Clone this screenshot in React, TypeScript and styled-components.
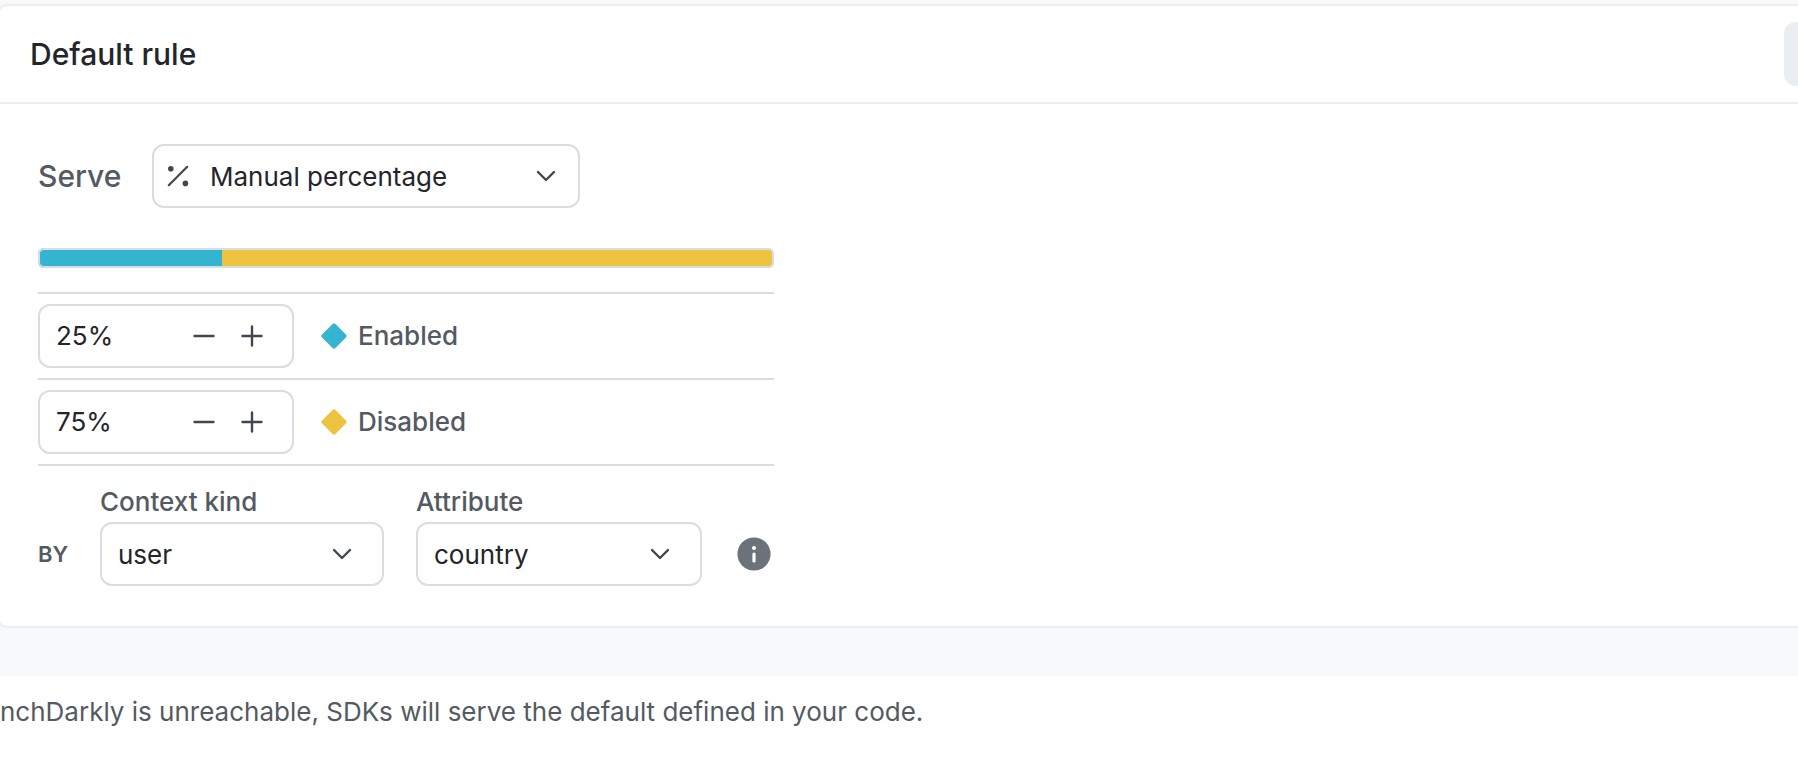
import React, { useState } from "react";
import styled, { createGlobalStyle } from "styled-components";

const color = {
  canvas: "#f8f9fb",
  surface: "#ffffff",
  subtleBorder: "#ebeef1",
  border: "#d8dde3",
  text: "#23252a",
  muted: "#545a62",
  icon: "#414750",
  info: "#6c727a",
  enabled: "#34b4d0",
  disabled: "#edc340",
};

const GlobalStyle = createGlobalStyle`
  *, *::before, *::after { box-sizing: border-box; }
  body {
    margin: 0;
    background: ${color.surface};
    color: ${color.text};
    font-family: Inter, "Liberation Sans", sans-serif;
    font-size: 26px;
    line-height: 32px;
  }
  button, input, select { font: inherit; color: inherit; }
`;

const Page = styled.main`
  overflow-x: hidden;
`;

const Canvas = styled.div`
  padding: 4px 0 48px;
  background: ${color.canvas};
`;

const Card = styled.section`
  margin: 0 -80px 0 -4px;
  border: 2px solid ${color.subtleBorder};
  border-radius: 12px;
  background: ${color.surface};
`;

const CardHeader = styled.header`
  display: flex;
  align-items: center;
  justify-content: space-between;
  padding: 16px 26px 16px 32px;
  border-bottom: 2px solid ${color.subtleBorder};
`;

const Title = styled.h2`
  margin: 0;
  font-size: 30px;
  font-weight: 500;
`;

const MoreButton = styled.button`
  width: 66px;
  height: 64px;
  border: 0;
  border-radius: 12px;
  background: ${color.subtleBorder};
`;

const CardBody = styled.div`
  max-width: 816px;
  padding: 40px;
`;

const ServeRow = styled.div`
  display: flex;
  align-items: center;
  gap: 32px;
`;

const ServeLabel = styled.label`
  width: 82px;
  font-size: 30px;
  font-weight: 500;
  color: ${color.muted};
`;

const SelectBox = styled.span<{ $width: number }>`
  position: relative;
  display: block;
  width: ${(p) => p.$width}px;
  color: ${color.icon};
`;

const NativeSelect = styled.select<{ $indent: number }>`
  display: block;
  width: 100%;
  height: 64px;
  padding: 2px 64px 0 ${(p) => p.$indent}px;
  border: 2px solid ${color.border};
  border-radius: 12px;
  background: ${color.surface};
  color: ${color.text};
  appearance: none;
`;

const Overlay = styled.svg<{ $left?: number; $right?: number }>`
  position: absolute;
  top: 20px;
  ${(p) => (p.$left !== undefined ? `left: ${p.$left}px;` : `right: ${p.$right}px;`)}
  pointer-events: none;
`;

const Bar = styled.div`
  display: flex;
  height: 20px;
  margin: 40px 0 24px;
  border-radius: 6px;
  overflow: hidden;
  outline: 2px solid ${color.border};
  outline-offset: -2px;
`;

const Segment = styled.div<{ $fill: string }>`
  background: ${(p) => p.$fill};
`;

const Variations = styled.ul`
  margin: 0;
  padding: 0;
  list-style: none;
  border-top: 2px solid ${color.border};
`;

const Variation = styled.li`
  display: flex;
  align-items: center;
  gap: 26px;
  padding: 10px 0;
  border-bottom: 2px solid ${color.border};
`;

const Stepper = styled.div`
  display: flex;
  align-items: center;
  width: 256px;
  height: 64px;
  padding: 0 16px;
  border: 2px solid ${color.border};
  border-radius: 12px;
`;

const StepperInput = styled.input`
  flex: 1;
  min-width: 0;
  padding: 0;
  border: 0;
  background: none;
  outline: none;
`;

const StepButton = styled.button`
  display: flex;
  align-items: center;
  justify-content: center;
  width: 48px;
  height: 48px;
  padding: 0;
  border: 0;
  background: none;
  color: ${color.icon};
`;

const VariationLabel = styled.label`
  display: flex;
  align-items: center;
  gap: 10px;
  font-weight: 500;
  color: ${color.muted};
`;

const RolloutBy = styled.div`
  display: flex;
  align-items: flex-end;
  padding-top: 20px;
  gap: 32px;
`;

const ControlLine = styled.div`
  display: flex;
  align-items: center;
  height: 64px;
`;

const By = styled.span`
  width: 30px;
  font-size: 22px;
  font-weight: 600;
  color: ${color.muted};
`;

const Field = styled.div`
  display: flex;
  flex-direction: column;
  gap: 4px;
`;

const FieldLabel = styled.label`
  font-weight: 500;
  color: ${color.muted};
`;

const InfoButton = styled.button`
  display: flex;
  justify-content: center;
  width: 40px;
  padding: 0;
  border: 0;
  background: none;
`;

const Note = styled.p`
  margin: 0;
  padding: 20px 0 30px;
  color: ${color.muted};
`;

const PercentIcon = () => (
  <Overlay $left={14} width="24" height="24" viewBox="0 0 24 24" aria-hidden="true">
    <path d="M2.8 21.2 21.2 2.8" stroke="currentColor" strokeWidth="2.2" strokeLinecap="round" />
    <circle cx="4.8" cy="4.8" r="2.8" fill="currentColor" />
    <circle cx="19.4" cy="19.4" r="2.8" fill="currentColor" />
  </Overlay>
);

const Chevron = ({ right }: { right: number }) => (
  <Overlay $right={right} width="24" height="24" viewBox="0 0 24 24" aria-hidden="true">
    <path
      d="m4 8 8 8 8-8"
      fill="none"
      stroke="currentColor"
      strokeWidth="2.4"
      strokeLinecap="round"
      strokeLinejoin="round"
    />
  </Overlay>
);

const StepIcon = ({ plus = false }: { plus?: boolean }) => (
  <svg width="24" height="24" viewBox="0 0 24 24" aria-hidden="true">
    <path
      d={plus ? "M2.5 12h19M12 2.5v19" : "M2.5 12h19"}
      stroke="currentColor"
      strokeWidth="2.4"
      strokeLinecap="round"
    />
  </svg>
);

const Diamond = ({ fill }: { fill: string }) => (
  <svg width="28" height="28" viewBox="0 0 28 28" aria-hidden="true">
    <rect x="4.6" y="4.6" width="18.8" height="18.8" rx="1.6" fill={fill} transform="rotate(45 14 14)" />
  </svg>
);

const InfoIcon = () => (
  <svg width="34" height="34" viewBox="0 0 34 34" aria-hidden="true">
    <circle cx="17" cy="17" r="16.6" fill={color.info} />
    <circle cx="17" cy="11" r="2" fill="#fff" />
    <path d="M17 17v7" stroke="#fff" strokeWidth="3.2" strokeLinecap="round" />
  </svg>
);

type SelectProps = {
  id: string;
  width: number;
  options: string[];
  indent?: number;
  chevronRight?: number;
  children?: React.ReactNode;
};

const Select = ({ id, width, options, indent = 16, chevronRight = 30, children }: SelectProps) => (
  <SelectBox $width={width}>
    <NativeSelect id={id} $indent={indent}>
      {options.map((option) => (
        <option key={option}>{option}</option>
      ))}
    </NativeSelect>
    {children}
    <Chevron right={chevronRight} />
  </SelectBox>
);

export default function App() {
  const [enabled, setEnabled] = useState(25);
  const clamp = (n: number) => Math.min(100, Math.max(0, n || 0));
  const rows = [
    { id: "enabled", name: "Enabled", value: enabled, fill: color.enabled, set: (n: number) => setEnabled(clamp(n)) },
    {
      id: "disabled",
      name: "Disabled",
      value: 100 - enabled,
      fill: color.disabled,
      set: (n: number) => setEnabled(100 - clamp(n)),
    },
  ];

  return (
    <Page>
      <GlobalStyle />
      <Canvas>
        <Card>
          <CardHeader>
            <Title>Default rule</Title>
            <MoreButton aria-label="Rule actions" />
          </CardHeader>
          <CardBody>
            <ServeRow>
              <ServeLabel htmlFor="serve">Serve</ServeLabel>
              <Select id="serve" width={428} indent={56} chevronRight={22} options={["Manual percentage"]}>
                <PercentIcon />
              </Select>
            </ServeRow>
            <Bar>
              {rows.map((row) => (
                <Segment key={row.id} $fill={row.fill} style={{ width: `${row.value}%` }} />
              ))}
            </Bar>
            <Variations>
              {rows.map((row) => (
                <Variation key={row.id}>
                  <Stepper>
                    <StepperInput
                      id={row.id}
                      value={`${row.value}%`}
                      onChange={(e) => row.set(parseInt(e.target.value, 10))}
                    />
                    <StepButton aria-label={`Decrease ${row.name}`} onClick={() => row.set(row.value - 1)}>
                      <StepIcon />
                    </StepButton>
                    <StepButton aria-label={`Increase ${row.name}`} onClick={() => row.set(row.value + 1)}>
                      <StepIcon plus />
                    </StepButton>
                  </Stepper>
                  <VariationLabel htmlFor={row.id}>
                    <Diamond fill={row.fill} />
                    {row.name}
                  </VariationLabel>
                </Variation>
              ))}
            </Variations>
            <RolloutBy>
              <ControlLine>
                <By>BY</By>
              </ControlLine>
              <Field>
                <FieldLabel htmlFor="context-kind">Context kind</FieldLabel>
                <Select id="context-kind" width={284} options={["user"]} />
              </Field>
              <Field>
                <FieldLabel htmlFor="attribute">Attribute</FieldLabel>
                <Select id="attribute" width={286} options={["country"]} />
              </Field>
              <ControlLine>
                <InfoButton aria-label="About rollout attributes">
                  <InfoIcon />
                </InfoButton>
              </ControlLine>
            </RolloutBy>
          </CardBody>
        </Card>
      </Canvas>
      <Note>nchDarkly is unreachable, SDKs will serve the default defined in your code.</Note>
    </Page>
  );
}
